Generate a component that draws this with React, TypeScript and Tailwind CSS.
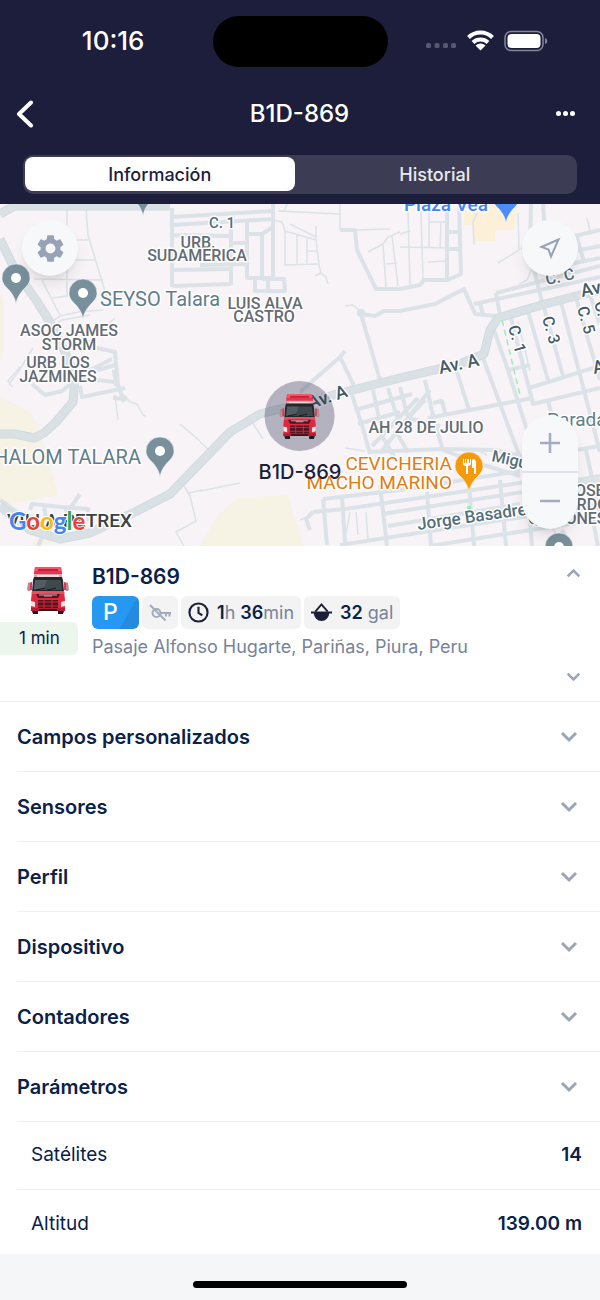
import React, { useState } from 'react';

type Tab = 'info' | 'history';

const SECTIONS = ['Campos personalizados', 'Sensores', 'Perfil', 'Dispositivo', 'Contadores', 'Parámetros'];

const PARAMS = [
  { label: 'Satélites', value: '14' },
  { label: 'Altitud', value: '139.00 m' },
];

// Road geometry grouped by stroke width
const THIN_ROADS = [
  'M67 208V280 M86 208L88 235L95 258L103 285L109 302 M67 240H89 M67 260H95 M34 279L103 280 M42 280L52 300L60 315 M52 298L67 296V281',
  'M48 324L60 316L78 312L103 310 M48 329L62 320L90 315 M115 318L85 345L104 351 M33 348L18 372L10 383',
  'M278 211L340 214 M284 211L287 204 M273 220L282 222L285 231V265L318 264 M285 231L316 240L319 265L321 273L315 276 M321 273L326 277L328 284',
  'M290 224L316 237 M297 234V264 M307 238V264 M307 251H317 M316 226V240 M340 204V230 M355 230L390 229',
  'M368 252L383 244L388 237L400 232 M383 244L386 288 M392 236L398 286 M386 264L397 263 M345 306L353 305L361 312',
  'M408 212L410 285 M421 212L423 280 M400 247L447 248 M429 210V247 M441 222L440 247 M429 222H445 M428 262L446 261 M400 234L410 231',
  'M474 245L473 222L477 213 M518 213L519 250L498 263 M587 218L590 231 M532 268L527 280L519 284 M518 322L530 371',
  'M252 422L263 439 M200 442L208 449 M200 491L240 483 M180 424L200 441 M184 486L190 496L196 521L176 532L184 546 M189 493L202 490',
  'M115 395L118 420 M124 395L130 402L137 404L143 415L146 416 M20 367L8 381L12 387 M345 448L365 451',
  'M350 512L346 533 M356 512L358 535 M366 512L368 540 M300 520L310 516 M478 450L487 455 M548 515L560 546',
];

const MID_ROADS = [
  'M172 208V287 M172 217L272 211 M172 225L273 219 M172 235L231 236 M215 236H231 M231 243H247 M172 254H231 M172 270L231 269 M173 286L231 284 M200 265L247 264',
  'M231 225V285 M247 221V278H273V204 M247 234H262L273 227 M262 234V278 M255 279V291H285L284 279H262 M268 279V290',
  'M340 230H355L357 250L376 289L400 289L420 285L424 280L448 280L461 274L459 204 M447 204V280 M447 232H459 M447 249H460',
  'M361 314L375 316L384 311L400 311L435 304L464 289L475 314L496 316 M361 314L380 380 M300 392L340 357L356 390 M340 357L345 351',
  'M531 204L530 252 M543 204L545 232 M531 236L522 250 M575 236L600 230 M560 254L600 246 M560 266L600 258 M496 293L600 266 M474 304L600 277',
  'M480 303L483 315 M496 293L500 315 M534 270L542 302 M576 234L584 262',
  // grid east of the avenue
  'M483 358L522 463 M494 330L508 370L530 440 M510 314L533 404L600 388 M529 388L600 366 M527 308L548 380 M543 304L563 376',
  'M561 302L600 452 M576 298L600 380 M590 295L600 325 M428 418L533 398 M508 370L530 365 M457 372L469 410 M548 400L560 450',
  // blocks around AH 28 de Julio
  'M425 380L434 420L443 450 M430 390L380 453 M418 398L372 446 M400 387L408 418L440 426 M352 395L362 425L370 454 M373 390L380 423 M388 388L397 417',
  'M355 410L412 394 M358 424L400 412 M433 403L442 401L446 416 M408 418L425 400 M395 430L408 452 M382 436L396 460',
  'M368 452L443 449L495 450L530 458 M443 450L480 464L520 476',
  // southern blocks
  'M323 499L400 490L520 471 M313 512L345 509L540 480 M382 514L600 480 M388 526L520 504 M340 545L600 505 M430 546L600 519',
  'M323 499L327 545 M313 512L306 519L310 530 M342 497L345 542 M380 485L387 546 M427 492L431 546 M469 486L474 546 M500 480L506 546 M526 474L532 546',
  'M577 450L600 446 M586 450L594 488L600 520 M577 480L600 476 M562 530L570 546 M590 505L598 546',
  'M30 510L32 504L62 507L88 509V521 M44 505L46 520 M62 520L80 494 M65 507L70 520 M38 546L46 530 M0 500L20 514L40 520',
  'M85 345L115 352L118 385L124 402 M82 378L114 382 M114 370L116 386 M80 386L82 397L125 388 M32 384L45 395L62 391L73 382 M82 375L115 365 M113 398L127 399 M88 371L112 359',
];

const WIDE_ROADS = [
  'M0 214L14 206H170',
  'M0 239L16 272L36 300L50 322L64 350L75 375L73 402L56 422L44 433L34 438L15 434H0',
  'M0 506L30 530L60 539L90 533L135 512L170 494L200 463L230 432L260 414L300 404L345 392L400 378L460 364L484 354L490 330L498 318L545 304L580 295L600 290',
];

const CHIP = 'flex h-[33px] items-center rounded-md bg-[#f3f3f4]';

interface MapLabelProps {
  x: number;
  y: number;
  children: React.ReactNode;
  size?: number;
  color?: string;
  rotate?: number;
  anchor?: 'start' | 'middle' | 'end';
  weight?: number;
}

const MapLabel: React.FC<MapLabelProps> = ({ x, y, children, size = 16, color = '#646b73', rotate = 0, anchor = 'middle', weight = 500 }) => (
  <text
    x={x}
    y={y}
    textAnchor={anchor}
    fontSize={size}
    fontWeight={weight}
    fill={color}
    stroke="#ffffff"
    strokeWidth={3}
    strokeLinejoin="round"
    paintOrder="stroke"
    transform={rotate ? `rotate(${rotate} ${x} ${y})` : undefined}
  >
    {children}
  </text>
);

const Pin: React.FC<{ x: number; y: number; color?: string; children?: React.ReactNode }> = ({ x, y, color = '#78909c', children }) => (
  <g transform={`translate(${x} ${y})`}>
    <path d="M0 0C-1 -6 -3 -9 -7 -14C-11 -18 -14 -21 -14 -26A14 14 0 0 1 14 -26C14 -21 11 -18 7 -14C3 -9 1 -6 0 0Z" fill={color} stroke="#fff" strokeOpacity={0.5} />
    {children ?? <circle cy={-26} r={5} fill="#fff" />}
  </g>
);

const Truck: React.FC<{ className?: string }> = ({ className }) => (
  <svg viewBox="0 0 44 50" className={className} aria-hidden="true">
    <path d="M9 2h26l1 6v8H8V8z" fill="#e8344c" />
    <path d="M9 2h26l.5 4h-27z" fill="#f2566a" />
    <path d="M12 4h20v2H12z" fill="#c41f38" />
    <path d="M8 9h28v4H8z" fill="#cfa9ae" />
    <path d="M11 10h22v2H11z" fill="#f4d5d8" />
    <path d="M7 15l1-3h28l1 3 1 12H6z" fill="#23272c" />
    <path d="M9 15h26l1 10H8z" fill="#3f484d" />
    <path d="M9 15h12l-3 9H8z" fill="#525c62" />
    <path d="M10 25l9-2M21 25l9-2" stroke="#15181b" strokeWidth="1" />
    <path d="M6 17L2 18v8l4-1M38 17l4 1v8l-4-1" fill="#e8344c" />
    <path d="M2 18h2v8l-3-1zM40 18h2l1 7-3 1z" fill="#a79397" />
    <path d="M6 26h32l1 9v11H5V35z" fill="#dd2942" />
    <path d="M6 26h32l.5 3h-33z" fill="#f04a60" />
    <path d="M10 29h24l-2 4H12z" fill="#4c1520" />
    <path d="M13 30h18M18 31h8" stroke="#dba5ac" strokeWidth="1" />
    <path d="M12 35h20v9H12z" fill="#56121d" />
    <path d="M12 37h20M12 41h20M18 35v9M26 35v9" stroke="#c92a3f" strokeWidth="1" />
    <path d="M5 36l4 1v5l-4-1zM39 36l-4 1v5l4-1z" fill="#f5e3df" />
    <path d="M5 43h34v3H5z" fill="#b81c32" />
    <path d="M6 46h6v3H7zM32 46h6l-1 3h-5z" fill="#241a20" />
    <path d="M13 44h18v2H13z" fill="#35151c" />
  </svg>
);

const Chevron: React.FC<{ up?: boolean; className?: string }> = ({ up = false, className }) => (
  <svg viewBox="0 0 18 12" className={className} fill="none" stroke="#9aa5b8" strokeWidth="3" aria-hidden="true">
    <path d={up ? 'M2 10L9 3L16 10' : 'M2 2L9 9L16 2'} />
  </svg>
);

const StatusBar: React.FC = () => (
  <div className="grid h-[82px] grid-cols-[1fr_175px_1fr] items-center">
    <span className="pr-[100px] text-right text-[26px] leading-8 font-medium max-[599px]:pr-4 min-[600px]:pr-[68px]">10:16</span>
    <span className="h-[51px] rounded-full bg-black" />
    <svg viewBox="0 0 122 24" className="ml-[38px] h-6 w-[122px]" aria-hidden="true">
      <g fill="#565870">
        <rect x="0" y="14" width="5" height="5" rx="1.5" />
        <rect x="8.5" y="14" width="5" height="5" rx="1.5" />
        <rect x="17" y="14" width="5" height="5" rx="1.5" />
        <rect x="25" y="14" width="5" height="5" rx="1.5" />
      </g>
      <g fill="none" stroke="#fff" strokeWidth="4">
        <path d="M42.5 8.5a17 17 0 0 1 24 0" />
        <path d="M47 13.5a11 11 0 0 1 15 0" />
      </g>
      <path d="M49.5 16.5a7.5 7.5 0 0 1 10 0L54.500 21.5z" fill="#fff" />
      <rect x="79" y="2.500" width="38" height="19" rx="6" fill="none" stroke="#85869a" strokeWidth="1.5" />
      <rect x="81.5" y="5" width="33" height="14" rx="4" fill="#fff" />
      <path d="M119 9c3 1 3 5 0 6z" fill="#85869a" />
    </svg>
  </div>
);

const TrackerMap: React.FC = () => (
  <section className="relative h-[342px] overflow-hidden bg-[#f7f3f7]" aria-label="Mapa">
    <svg viewBox="0 204 600 342" preserveAspectRatio="xMidYMid slice" className="h-full w-full font-[Roboto,sans-serif]">
      <g fill="#f6f2e4">
        <path d="M0 397L30 412L37 424L45 450L58 495L0 507z" />
        <path d="M0 294L4 300V348L0 363z" />
        <path d="M200 546L218 515L238 498L288 495L303 546z" />
        <path d="M30 546L42 534L58 541L40 546z" />
      </g>
      <path d="M464 204H517L514 230H495V241H474V225H464z" fill="#fdf0d8" />
      <g fill="none" stroke="#dbe3e8" strokeLinejoin="round">
        {THIN_ROADS.map(d => <path key={d} d={d} strokeWidth={1.5} />)}
        {MID_ROADS.map(d => <path key={d} d={d} strokeWidth={4} />)}
      </g>
      <g fill="none" strokeLinejoin="round">
        {WIDE_ROADS.map(d => <path key={d} d={d} strokeWidth={9} stroke="#cfdae0" />)}
        {WIDE_ROADS.map(d => <path key={d} d={d} strokeWidth={7} stroke="#dae1e5" />)}
      </g>
      <circle cx={361} cy={313} r={4} fill="#d9e2e8" />
      <path d="M502 320L520 395" stroke="#a5e8b8" strokeWidth={1.5} strokeDasharray="6 4" />
      <path d="M469 506V514" stroke="#9becb0" strokeWidth={4} />

      <Pin x={143} y={216} />
      <Pin x={16} y={304} />
      <Pin x={83} y={319} />
      <Pin x={160} y={477} />
      <Pin x={559} y={573} />
      <Pin x={506} y={223} color="#4a8df8">
        <path d="M-4 -24V-19M4 -24V-19" stroke="#fff" strokeWidth="2" fill="none" />
      </Pin>
      <Pin x={469} y={492} color="#f59a0b">
        <path d="M-6 -33v4q0 3 3 3v8h2v-8q3 0 3 -3v-4h-1v4h-1v-4h-2v4h-1v-4h-1v4h-1v-4zM4 -33q3 0 3 4v11h-2v-6h-2v-6q0 -3 1 -3z" fill="#fff" />
      </Pin>

      <MapLabel x={446} y={211} size={19} color="#4285f4">Plaza Vea</MapLabel>
      <MapLabel x={222} y={228} size={15} color="#546e7a">C. 1</MapLabel>
      <MapLabel x={198} y={248}>URB.</MapLabel>
      <MapLabel x={197} y={261}>SUDAMERICA</MapLabel>
      <MapLabel x={100} y={306} size={20} color="#607d8b" anchor="start" weight={400}>SEYSO Talara</MapLabel>
      <MapLabel x={265} y={309}>LUIS ALVA</MapLabel>
      <MapLabel x={264} y={322}>CASTRO</MapLabel>
      <MapLabel x={69} y={336}>ASOC JAMES</MapLabel>
      <MapLabel x={69} y={350}>STORM</MapLabel>
      <MapLabel x={58} y={368}>URB LOS</MapLabel>
      <MapLabel x={58} y={382}>JAZMINES</MapLabel>
      <MapLabel x={141} y={464} size={20} color="#607d8b" anchor="end" weight={400}>HALOM TALARA</MapLabel>
      <MapLabel x={426} y={433}>AH 28 DE JULIO</MapLabel>
      <MapLabel x={440} y={374} size={18} color="#455a64" anchor="start" rotate={-12}>Av. A</MapLabel>
      <MapLabel x={310} y={409} size={18} color="#455a64" anchor="start" rotate={-18}>Av. A</MapLabel>
      <MapLabel x={582} y={297} size={18} color="#455a64" anchor="start" rotate={-12}>Av. B</MapLabel>
      <MapLabel x={561} y={282} color="#546e7a" rotate={-12}>C. C</MapLabel>
      <MapLabel x={508} y={327} color="#455a64" anchor="start" rotate={74}>C. 1</MapLabel>
      <MapLabel x={542} y={318} color="#455a64" anchor="start" rotate={74}>C. 3</MapLabel>
      <MapLabel x={577} y={308} color="#455a64" anchor="start" rotate={74}>C. 5</MapLabel>
      <MapLabel x={594} y={303} color="#455a64" anchor="start" rotate={74}>C. 6</MapLabel>
      <MapLabel x={594} y={374} size={18} color="#455a64" anchor="start" rotate={-12}>Av. C</MapLabel>
      <MapLabel x={547} y={426} size={19} color="#607d8b" anchor="start" weight={400}>Parada</MapLabel>
      <MapLabel x={491} y={461} color="#546e7a" anchor="start" rotate={12}>Miguel</MapLabel>
      <MapLabel x={418} y={530} size={17} color="#546e7a" anchor="start" rotate={-8}>Jorge Basadre</MapLabel>
      <MapLabel x={566} y={496} anchor="start">JOSE</MapLabel>
      <MapLabel x={566} y={510} anchor="start">ARDO</MapLabel>
      <MapLabel x={528} y={524} anchor="start">QUIÑONES</MapLabel>
      <MapLabel x={452} y={470} size={19} color="#df7d12" anchor="end" weight={400}>CEVICHERIA</MapLabel>
      <MapLabel x={452} y={489} size={19} color="#df7d12" anchor="end" weight={400}>MACHO MARINO</MapLabel>
      <MapLabel x={132} y={527} size={19} color="#3c4145" anchor="end">VILLA PETREX</MapLabel>

      <text x={9} y={530} fontSize={24} fontFamily="Lato, sans-serif" fontWeight={700} stroke="#fff" strokeWidth={2} paintOrder="stroke">
        <tspan fill="#4285f4">G</tspan>
        <tspan fill="#ea4335">o</tspan>
        <tspan fill="#fbbc04">o</tspan>
        <tspan fill="#4285f4">g</tspan>
        <tspan fill="#34a853">l</tspan>
        <tspan fill="#ea4335">e</tspan>
      </text>
    </svg>

    {/* Vehicle marker */}
    <div className="absolute top-[177px] left-1/2 flex -translate-x-1/2 flex-col items-center">
      <div className="flex size-[70px] items-center justify-center rounded-full bg-[#1c1e3b]/30">
        <Truck className="h-[48px] w-[42px]" />
      </div>
      <span className="mt-[7px] text-[20px] leading-7 font-medium text-[#1c1e3b]">B1D-869</span>
    </div>

    {/* Map controls */}
    <button type="button" aria-label="Ajustes del mapa" className="absolute top-4 left-[22px] flex size-14 items-center justify-center rounded-full bg-[#f6f8fa] shadow-lg">
      <svg viewBox="0 0 24 24" className="size-[33px]" fill="#98a2b6">
        <path d="M19.140 12.940c.04-.3.060-.61.060-.94 0-.32-.02-.64-.07-.94l2.030-1.580c.18-.14.230-.41.120-.61l-1.920-3.320c-.12-.22-.37-.29-.59-.22l-2.390.96c-.5-.38-1.030-.7-1.620-.94L14.400 2.810c-.04-.24-.24-.41-.48-.41h-3.840c-.24 0-.43.17-.47.41L9.250 5.350c-.59.24-1.130.57-1.620.94l-2.390-.96c-.22-.08-.47 0-.59.22L2.740 8.870c-.12.21-.08.47.12.61l2.030 1.580c-.05.3-.09.630-.09.940s.020.640.070.940l-2.030 1.580c-.18.14-.23.41-.12.61l1.920 3.320c.12.22.37.29.59.22l2.390-.96c.5.38 1.030.7 1.620.94l.36 2.540c.05.24.24.41.480.41h3.840c.24 0 .44-.17.47-.41l.36-2.540c.59-.24 1.130-.56 1.620-.94l2.390.96c.22.080.47 0 .59-.22l1.920-3.320c.12-.22.070-.47-.12-.61l-2.010-1.580zM12 15.600c-1.980 0-3.600-1.620-3.600-3.600s1.620-3.600 3.600-3.600 3.600 1.620 3.600 3.600-1.620 3.600-3.600 3.600z" />
      </svg>
    </button>
    <button type="button" aria-label="Mi ubicación" className="absolute top-4 right-[22px] flex size-14 items-center justify-center rounded-full bg-[#f6f8fa] shadow-lg">
      <svg viewBox="0 0 24 24" className="size-6" fill="none" stroke="#98a2b6" strokeWidth="2">
        <path d="M20.5 3.5L3.5 11L10.5 13.5L13 20.5z" />
      </svg>
    </button>
    <div className="absolute top-[211px] right-[22px] flex w-14 flex-col overflow-hidden rounded-full bg-[#f6f8fa] shadow-lg">
      <button type="button" aria-label="Acercar" className="flex h-[58px] items-center justify-center border-b-2 border-[#dfe2ea]">
        <svg viewBox="0 0 20 20" className="size-5" stroke="#a3abbd" strokeWidth="2.5"><path d="M0 10H20M10 0V20" /></svg>
      </button>
      <button type="button" aria-label="Alejar" className="flex h-14 items-center justify-center">
        <svg viewBox="0 0 20 20" className="size-5" stroke="#a3abbd" strokeWidth="2.5"><path d="M0 10H20" /></svg>
      </button>
    </div>
  </section>
);

const VehicleCard: React.FC = () => (
  <section className="flex h-[156px] border-b border-[#eff0f2]">
    <div className="flex w-[78px] shrink-0 flex-col pt-[18px]">
      <Truck className="ml-[26px] h-[52px] w-[44px]" />
      <span className="mt-[6px] flex h-[33px] items-center rounded-r-md bg-[#ecf6ed] pl-[19px] text-[17px] text-[#0a2148]">1 min</span>
    </div>
    <div className="ml-[14px] min-w-0 flex-1 pt-[17px]">
      <h2 className="text-[21px] leading-7 font-semibold text-[#0a2148]">B1D-869</h2>
      <div className="mt-[5px] flex gap-[3px] text-[18px] text-[#77839b]">
        <span className="flex h-[33px] w-[47px] items-center rounded-md bg-linear-120 from-[#2598f4] from-70% to-[#238be0] to-70% pl-[11px] text-[23px] font-medium text-white">P</span>
        <span className={`${CHIP} w-[36px] justify-center`}>
          <svg viewBox="0 0 22 18" className="h-[18px] w-[22px]" fill="none" stroke="#a2abbb" strokeWidth="2" role="img" aria-label="Motor apagado">
            <circle cx="7.5" cy="9" r="4" />
            <path d="M11.5 9H22M17 9V12.5M20.5 9V12.5M1 1L16.5 16.5" />
          </svg>
        </span>
        <span className={`${CHIP} px-[7px]`}>
          <svg viewBox="0 0 22 22" className="mr-2 size-[21px]" fill="none" stroke="#1b1d39" strokeWidth="2.2" aria-hidden="true">
            <circle cx="11" cy="11" r="9.5" />
            <path d="M11 5V11.5L15 14" />
          </svg>
          <span><b className="font-semibold text-[#0a2148]">1</b>h <b className="font-semibold text-[#0a2148]">36</b>min</span>
        </span>
        <span className={`${CHIP} px-[7px]`}>
          <svg viewBox="0 0 22 22" className="mr-2 size-[21px]" aria-hidden="true">
            <path d="M4.5 10L11 2.5L17.5 10" fill="none" stroke="#1b1d39" strokeWidth="2" />
            <path d="M0 10H22V12H19A8 8 0 0 1 3 12H0z" fill="#1b1d39" />
          </svg>
          <span><b className="font-semibold text-[#0a2148]">32</b> gal</span>
        </span>
      </div>
      <p className="mt-[6px] text-[18px] leading-6 text-[#77839b]">Pasaje Alfonso Hugarte, Pariñas, Piura, Peru</p>
    </div>
    <div className="flex flex-col justify-between pt-[22px] pr-[19px] pb-[19px]">
      <button type="button" aria-label="Contraer"><Chevron up className="h-[10px] w-[15px]" /></button>
      <button type="button" aria-label="Expandir"><Chevron className="h-[10px] w-[15px]" /></button>
    </div>
  </section>
);

export default function App() {
  const [tab, setTab] = useState<Tab>('info');

  const tabClass = (key: Tab): string =>
    `h-[34px] rounded-lg text-[18px] font-medium ${tab === key ? 'bg-white text-[#1c1e3b]' : 'text-[#e9e9ee]'}`;

  return (
    <div className="flex min-h-screen flex-col bg-white font-[Inter,sans-serif]">
      <header className="bg-[#1c1e3b] pb-[10px] text-white">
        <StatusBar />
        <div className="flex h-[63px] items-center justify-between px-4">
          <button type="button" aria-label="Atrás" className="w-[27px]">
            <svg viewBox="0 0 20 28" className="h-7 w-5" fill="none" stroke="#fff" strokeWidth="4" strokeLinecap="round" strokeLinejoin="round">
              <path d="M15 2.5L3 14L15 25.5" />
            </svg>
          </button>
          <h1 className="text-[24px] leading-8 font-medium">B1D-869</h1>
          <button type="button" aria-label="Más opciones" className="flex w-7 gap-[2px]">
            <span className="size-[5px] rounded-full bg-white" />
            <span className="size-[5px] rounded-full bg-white" />
            <span className="size-[5px] rounded-full bg-white" />
          </button>
        </div>
        <div className="mx-[23px] mt-[10px] grid grid-cols-[49fr_51fr] rounded-[10px] bg-[#3c3d55] p-[2px] pb-[3px]">
          <button type="button" aria-pressed={tab === 'info'} onClick={() => setTab('info')} className={tabClass('info')}>Información</button>
          <button type="button" aria-pressed={tab === 'history'} onClick={() => setTab('history')} className={tabClass('history')}>Historial</button>
        </div>
      </header>

      <TrackerMap />
      <VehicleCard />

      <div className="pl-[17px]">
        {SECTIONS.map(name => (
          <button key={name} type="button" className="flex h-[70px] w-full items-center justify-between border-b border-[#eff0f2] pr-[22px] text-left text-[20px] font-semibold text-[#0a2148]">
            {name}
            <Chevron className="h-[12px] w-[18px]" />
          </button>
        ))}
        <dl className="text-[19px] text-[#0a2148]">
          {PARAMS.map(p => (
            <div key={p.label} className="flex h-[68px] items-center justify-between border-b border-[#eff0f2] pr-[18px] pl-[14px] last:h-16 last:border-b-0 last:pt-1">
              <dt>{p.label}</dt>
              <dd className="font-semibold">{p.value}</dd>
            </div>
          ))}
        </dl>
      </div>

      <footer className="flex min-h-[46px] flex-1 items-end justify-center bg-[#f5f6f8] pb-3">
        <span className="h-[7px] w-[214px] rounded-full bg-black" />
      </footer>
    </div>
  );
}
